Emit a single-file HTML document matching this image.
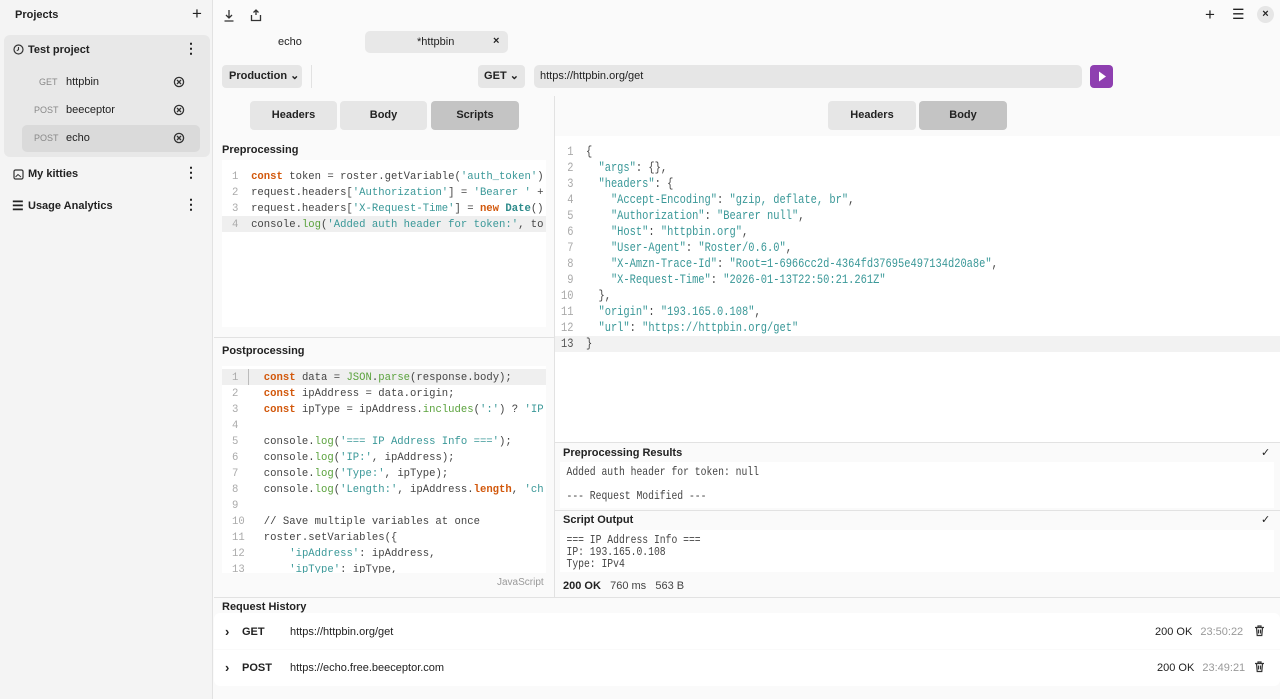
<!DOCTYPE html><html><head><meta charset="utf-8"><style>
*{box-sizing:border-box;margin:0;padding:0}
body{width:1280px;height:699px;overflow:hidden;background:#fafafa;font-family:"Liberation Sans",sans-serif;color:#222;position:relative;font-size:11px}
.a{position:absolute}
.b{font-weight:bold}
.code{font-family:"Liberation Mono",monospace;font-size:10.6px;white-space:pre;color:#444}
.ln{color:#aaa}
.k{color:#d2580c;font-weight:bold}
.s{color:#3a9898}
.f{color:#5aa23c}
.t{color:#2d8b8b;font-weight:bold}
.btn{background:#e6e6e6;border-radius:4px;text-align:center;font-weight:bold}
.rc{font-family:"Liberation Mono",monospace;font-size:13px;white-space:pre;color:#444;transform:scaleX(.8);transform-origin:0 0}
.rs{font-family:"Liberation Mono",monospace;font-size:12px;white-space:pre;color:#444;transform:scaleX(.81);transform-origin:0 0;line-height:12px}
</style></head><body>
<div class="a" style="left:0;top:0;width:213px;height:699px;background:#f4f4f4;border-right:1px solid #e2e2e2"></div>
<div class="a b" style="left:15px;top:9px;font-size:11px">Projects</div>
<div class="a" style="left:192px;top:4px;font-size:17px">+</div>
<div class="a" style="left:4px;top:35px;width:206px;height:122px;background:#e8e8e8;border-radius:6px"></div>
<div class="a" style="left:22px;top:125px;width:178px;height:27px;background:#dadada;border-radius:5px"></div>
<svg class="a" style="left:13px;top:44px" width="11" height="11"><circle cx="5.5" cy="5.5" r="4.5" fill="none" stroke="#333" stroke-width="1.2"/><path d="M5.5 3v2.7l-1.7 1" stroke="#333" fill="none" stroke-width="1.1"/></svg>
<div class="a b" style="left:28px;top:44px">Test project</div>
<div class="a b" style="left:184px;top:40px;font-size:14px">⋮</div>
<div class="a" style="left:39px;top:77px;color:#888;font-size:9px">GET</div><div class="a" style="left:66px;top:76px">httpbin</div>
<div class="a" style="left:34px;top:105px;color:#888;font-size:9px">POST</div><div class="a" style="left:66px;top:104px">beeceptor</div>
<div class="a" style="left:34px;top:133px;color:#888;font-size:9px">POST</div><div class="a" style="left:66px;top:132px">echo</div>
<svg class="a" style="left:173px;top:76px" width="12" height="70"><g fill="none" stroke="#333" stroke-width="1.3"><circle cx="6" cy="6" r="4.6"/><path d="M4 4l4 4M8 4l-4 4"/><circle cx="6" cy="34" r="4.6"/><path d="M4 32l4 4M8 32l-4 4"/><circle cx="6" cy="62" r="4.6"/><path d="M4 60l4 4M8 60l-4 4"/></g></svg>
<svg class="a" style="left:13px;top:169px" width="11" height="11"><rect x="1" y="1" width="9" height="9" rx="1.5" fill="none" stroke="#333" stroke-width="1.2"/><path d="M2.5 8l2.5-2.5 3 2.5" stroke="#333" fill="none"/></svg>
<div class="a b" style="left:28px;top:168px">My kitties</div>
<div class="a b" style="left:184px;top:164px;font-size:14px">⋮</div>
<div class="a b" style="left:12px;top:198px;font-size:13px">☰</div>
<div class="a b" style="left:28px;top:200px">Usage Analytics</div>
<div class="a b" style="left:184px;top:196px;font-size:14px">⋮</div>
<svg class="a" style="left:223px;top:9px" width="40" height="13"><g fill="none" stroke="#333" stroke-width="1.3"><path d="M6 1v8M3 6l3 3 3-3M1.5 12h9"/><path d="M33 1v5M30.5 3.5L33 1l2.5 2.5M28.5 6v5.5h9V6"/></g></svg>
<div class="a" style="left:1205px;top:5px;font-size:17px">+</div>
<div class="a" style="left:1232px;top:6px;font-size:14px">☰</div>
<div class="a" style="left:1257px;top:6px;width:17px;height:17px;border-radius:50%;background:#e6e6e6;text-align:center;font-size:11px;line-height:17px;font-weight:bold">×</div>
<div class="a" style="left:278px;top:36px">echo</div>
<div class="a" style="left:365px;top:31px;width:143px;height:22px;background:#e8e8e8;border-radius:5px"></div>
<div class="a" style="left:417px;top:36px">*httpbin</div>
<div class="a b" style="left:493px;top:35px">×</div>
<div class="a btn" style="left:222px;top:65px;width:80px;height:23px;line-height:23px;text-align:left;padding-left:7px">Production ⌄</div>
<div class="a" style="left:311px;top:65px;width:1px;height:23px;background:#e2e2e2"></div>
<div class="a btn" style="left:478px;top:65px;width:47px;height:23px;line-height:23px">GET ⌄</div>
<div class="a" style="left:534px;top:65px;width:548px;height:23px;background:#e6e6e6;border-radius:5px;padding-left:6px;line-height:23px">https://httpbin.org/get</div>
<div class="a" style="left:1090px;top:65px;width:23px;height:23px;background:#8e3fb0;border-radius:4px"><svg width="23" height="23"><path d="M9 6.5v10l7-5z" fill="#fff"/></svg></div>
<div class="a" style="left:554px;top:96px;width:1px;height:502px;background:#e2e2e2"></div>
<div class="a btn" style="left:250px;top:101px;width:87px;height:29px;line-height:29px">Headers</div>
<div class="a btn" style="left:340px;top:101px;width:87px;height:29px;line-height:29px">Body</div>
<div class="a btn" style="left:431px;top:101px;width:88px;height:29px;line-height:29px;background:#c4c4c4">Scripts</div>
<div class="a b" style="left:222px;top:144px">Preprocessing</div>
<div class="a" style="left:222px;top:160px;width:324px;height:167px;background:#fff"></div>
<div class="a" style="left:222px;top:216px;width:324px;height:16px;background:#efefef"></div>
<div class="a code" style="left:232px;top:169px;line-height:16px;width:314px;overflow:hidden"><span class="ln">1</span>  <span class="k">const</span> token = roster.getVariable(<span class="s">'auth_token'</span>)
<span class="ln">2</span>  request.headers[<span class="s">'Authorization'</span>] = <span class="s">'Bearer '</span> +
<span class="ln">3</span>  request.headers[<span class="s">'X-Request-Time'</span>] = <span class="k">new</span> <span class="t">Date</span>()
<span class="ln">4</span>  console.<span class="f">log</span>(<span class="s">'Added auth header for token:'</span>, to</div>
<div class="a" style="left:214px;top:337px;width:340px;height:1px;background:#e2e2e2"></div>
<div class="a b" style="left:222px;top:345px">Postprocessing</div>
<div class="a" style="left:222px;top:366px;width:324px;height:207px;background:#fff;overflow:hidden">
<div class="a" style="left:0;top:3px;width:324px;height:16px;background:#efefef"></div>
<div class="a" style="left:26px;top:3px;width:1px;height:16px;background:#bbb"></div>
<div class="a code" style="left:10px;top:4px;line-height:16px"><span class="ln">1</span>    <span class="k">const</span> data = <span class="f">JSON</span>.<span class="f">parse</span>(response.body);
<span class="ln">2</span>    <span class="k">const</span> ipAddress = data.origin;
<span class="ln">3</span>    <span class="k">const</span> ipType = ipAddress.<span class="f">includes</span>(<span class="s">':'</span>) ? <span class="s">'IP</span>
<span class="ln">4</span>
<span class="ln">5</span>    console.<span class="f">log</span>(<span class="s">'=== IP Address Info ==='</span>);
<span class="ln">6</span>    console.<span class="f">log</span>(<span class="s">'IP:'</span>, ipAddress);
<span class="ln">7</span>    console.<span class="f">log</span>(<span class="s">'Type:'</span>, ipType);
<span class="ln">8</span>    console.<span class="f">log</span>(<span class="s">'Length:'</span>, ipAddress.<span class="k">length</span>, <span class="s">'ch</span>
<span class="ln">9</span>
<span class="ln">10</span>   // Save multiple variables at once
<span class="ln">11</span>   roster.setVariables({
<span class="ln">12</span>       <span class="s">'ipAddress'</span>: ipAddress,
<span class="ln">13</span>       <span class="s">'ipType'</span>: ipType,</div></div>
<div class="a" style="left:497px;top:577px;color:#999;font-size:10px">JavaScript</div>
<div class="a btn" style="left:828px;top:101px;width:88px;height:29px;line-height:29px">Headers</div>
<div class="a btn" style="left:919px;top:101px;width:88px;height:29px;line-height:29px;background:#c4c4c4">Body</div>
<div class="a" style="left:555px;top:136px;width:725px;height:306px;background:#fff"></div>
<div class="a" style="left:555px;top:336px;width:725px;height:16px;background:#f2f2f2"></div>
<div class="a rc" style="left:561px;top:144px;line-height:16px"><span class="ln"> 1</span>  {
<span class="ln"> 2</span>    <span class="s">"args"</span>: {},
<span class="ln"> 3</span>    <span class="s">"headers"</span>: {
<span class="ln"> 4</span>      <span class="s">"Accept-Encoding"</span>: <span class="s">"gzip, deflate, br"</span>,
<span class="ln"> 5</span>      <span class="s">"Authorization"</span>: <span class="s">"Bearer null"</span>,
<span class="ln"> 6</span>      <span class="s">"Host"</span>: <span class="s">"httpbin.org"</span>,
<span class="ln"> 7</span>      <span class="s">"User-Agent"</span>: <span class="s">"Roster/0.6.0"</span>,
<span class="ln"> 8</span>      <span class="s">"X-Amzn-Trace-Id"</span>: <span class="s">"Root=1-6966cc2d-4364fd37695e497134d20a8e"</span>,
<span class="ln"> 9</span>      <span class="s">"X-Request-Time"</span>: <span class="s">"2026-01-13T22:50:21.261Z"</span>
<span class="ln">10</span>    },
<span class="ln">11</span>    <span class="s">"origin"</span>: <span class="s">"193.165.0.108"</span>,
<span class="ln">12</span>    <span class="s">"url"</span>: <span class="s">"https://httpbin.org/get"</span>
<span class="ln" style="color:#555">13</span>  }</div>
<div class="a" style="left:555px;top:442px;width:725px;height:1px;background:#e2e2e2"></div>
<div class="a b" style="left:563px;top:447px">Preprocessing Results</div><div class="a" style="left:1261px;top:446px">✓</div>
<div class="a" style="left:560px;top:462px;width:714px;height:46px;background:#fff;overflow:hidden"><div class="rs" style="padding:4px 0 0 8px">Added auth header for token: null

--- Request Modified ---</div></div>
<div class="a" style="left:555px;top:510px;width:725px;height:1px;background:#e2e2e2"></div>
<div class="a b" style="left:563px;top:514px">Script Output</div><div class="a" style="left:1261px;top:513px">✓</div>
<div class="a" style="left:560px;top:530px;width:714px;height:42px;background:#fff;overflow:hidden"><div class="rs" style="padding:4px 0 0 8px">=== IP Address Info ===
IP: 193.165.0.108
Type: IPv4</div></div>
<div class="a" style="left:563px;top:580px"><b>200 OK</b>&nbsp;&nbsp; <span style="color:#444">760 ms &nbsp; 563 B</span></div>
<div class="a" style="left:214px;top:597px;width:1066px;height:1px;background:#e2e2e2"></div>
<div class="a b" style="left:222px;top:601px">Request History</div>
<div class="a" style="left:214px;top:613px;width:1066px;height:36px;background:#fff;border-radius:6px 6px 0 0"></div>
<div class="a" style="left:214px;top:650px;width:1066px;height:36px;background:#fff;border-radius:0 0 6px 6px"></div>
<div class="a b" style="left:225px;top:624px;font-size:13px">›</div><div class="a b" style="left:242px;top:626px">GET</div><div class="a" style="left:290px;top:626px">https://httpbin.org/get</div>
<div class="a b" style="left:225px;top:660px;font-size:13px">›</div><div class="a b" style="left:242px;top:662px">POST</div><div class="a" style="left:290px;top:662px">https://echo.free.beeceptor.com</div>
<div class="a" style="left:1155px;top:626px">200 OK <span style="color:#999;margin-left:5px">23:50:22</span></div>
<div class="a" style="left:1157px;top:662px">200 OK <span style="color:#999;margin-left:5px">23:49:21</span></div>
<svg class="a" style="left:1254px;top:625px" width="11" height="50"><g fill="none" stroke="#333" stroke-width="1.2"><path d="M1 2.5h9M4 2.5V1h3v1.5M2.5 2.5l.7 8h4.6l.7-8M4.5 4.5v4M6.5 4.5v4"/><path d="M1 38.5h9M4 38.5V37h3v1.5M2.5 38.5l.7 8h4.6l.7-8M4.5 40.5v4M6.5 40.5v4"/></g></svg>
</body></html>
